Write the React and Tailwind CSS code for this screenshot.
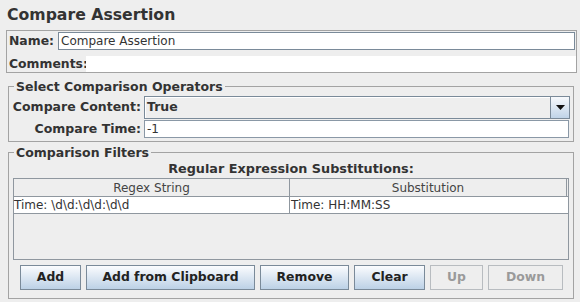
import React from "react";

const font = { fontFamily: '"DejaVu Sans", "Liberation Sans", sans-serif' };

function Btn({ label, width, disabled = false }) {
    const base = "h-[25px] flex items-center justify-center text-[12.4px] font-bold border";
    const look = disabled
        ? "border-[#b8bcc0] bg-[#eeeeee] text-[#9a9a9a]"
        : "border-[#7a8a99] bg-gradient-to-b from-[#fbfcfe] to-[#bcd1e6] text-[#222]";
    return (
        <div className={`${base} ${look} ${width}`}>{label}</div>
    );
}

export default function App() {
    return (
        <div className="w-[580px] h-[302px] bg-[#eeeeee] text-[#333] overflow-hidden" style={font}>
            {/* title */}
            <div className="h-[30px] pl-[7px] pt-[5px] text-[15.7px] font-bold leading-[20px] text-[#333]">
                Compare Assertion
            </div>

            {/* name / comments */}
            <div className="ml-[6px] w-[571px] h-[43px] border border-[#a3a3a3]">
                <div className="h-[20px] flex items-center">
                    <div className="w-[51px] pl-[2px] text-[12.4px] font-bold">Name:</div>
                    <div className="w-[517px] h-[18px] bg-white border border-[#7a8a99] flex items-center pl-[2px] text-[12px]">
                        Compare Assertion
                    </div>
                </div>
                <div className="mt-[5px] h-[16px] flex items-center">
                    <div className="w-[79px] pl-[2px] text-[12.4px] font-bold">Comments:</div>
                    <div className="flex-1 h-[16px] bg-white"></div>
                </div>
            </div>

            {/* operators */}
            <fieldset className="mt-[6px] ml-[8px] w-[566px] border border-[#a3a3a3] pb-[2px]">
                <legend className="ml-[5px] px-[2px] h-[15px] leading-[15px] text-[12.5px] font-bold">
                    Select Comparison Operators
                </legend>
                <div className="pt-[2px] grid grid-cols-[135px_1fr] gap-y-[1px] items-center">
                    <div className="text-right pr-[3px] text-[12.5px] font-bold">Compare Content:</div>
                    <div className="w-[426px] h-[23px] border border-[#7a8a99] bg-[#eeeeee] shadow-[inset_1px_1px_0_#ffffff] flex">
                        <div className="flex-1 flex items-center pl-[2px] text-[12.5px] font-bold">True</div>
                        <div className="w-[19px] h-full border-l border-[#7a8a99] bg-gradient-to-b from-[#f7f9fc] to-[#c0d4e8] flex items-center justify-center">
                            <svg width="9" height="5" viewBox="0 0 9 5">
                                <path d="M0 0 H9 L4.5 5 Z" fill="#111" />
                            </svg>
                        </div>
                    </div>
                    <div className="text-right pr-[3px] text-[12.5px] font-bold">Compare Time:</div>
                    <div className="w-[425px] h-[18px] bg-white border border-[#8a98a6] flex items-center pl-[2px] text-[12px]">
                        -1
                    </div>
                </div>
            </fieldset>

            {/* filters */}
            <fieldset className="mt-[3px] ml-[8px] w-[566px] h-[154px] border border-[#a3a3a3]">
                <legend className="ml-[5px] px-[2px] h-[15px] leading-[15px] text-[12.5px] font-bold">
                    Comparison Filters
                </legend>
                <div className="h-[18px] leading-[18px] text-center text-[12.8px] font-bold">
                    Regular Expression Substitutions:
                </div>
                <div className="mx-[4px] h-[82px] border border-[#8f979f] text-[12px]">
                    <div className="grid grid-cols-[276px_1fr] h-[18px] border-b border-[#8f979f]">
                        <div className="border-r border-[#8f979f] flex items-center justify-center text-[#444]">Regex String</div>
                        <div className="mr-[1px] border-r border-[#8f979f] flex items-center justify-center text-[#444]">Substitution</div>
                    </div>
                    <div className="grid grid-cols-[276px_1fr] h-[17px] bg-white border-b border-[#8f979f]">
                        <div className="border-r border-[#8f979f] flex items-center leading-[16px]">Time: \d\d:\d\d:\d\d</div>
                        <div className="flex items-center pl-[1px] leading-[16px]">Time: HH:MM:SS</div>
                    </div>
                </div>
                <div className="mt-[5px] pl-[11px] flex gap-[5px]">
                    <Btn label="Add" width="w-[61px]" />
                    <Btn label="Add from Clipboard" width="w-[169px]" />
                    <Btn label="Remove" width="w-[89px]" />
                    <Btn label="Clear" width="w-[71px]" />
                    <Btn label="Up" width="w-[53px]" disabled />
                    <Btn label="Down" width="w-[75px]" disabled />
                </div>
            </fieldset>
        </div>
    );
}
